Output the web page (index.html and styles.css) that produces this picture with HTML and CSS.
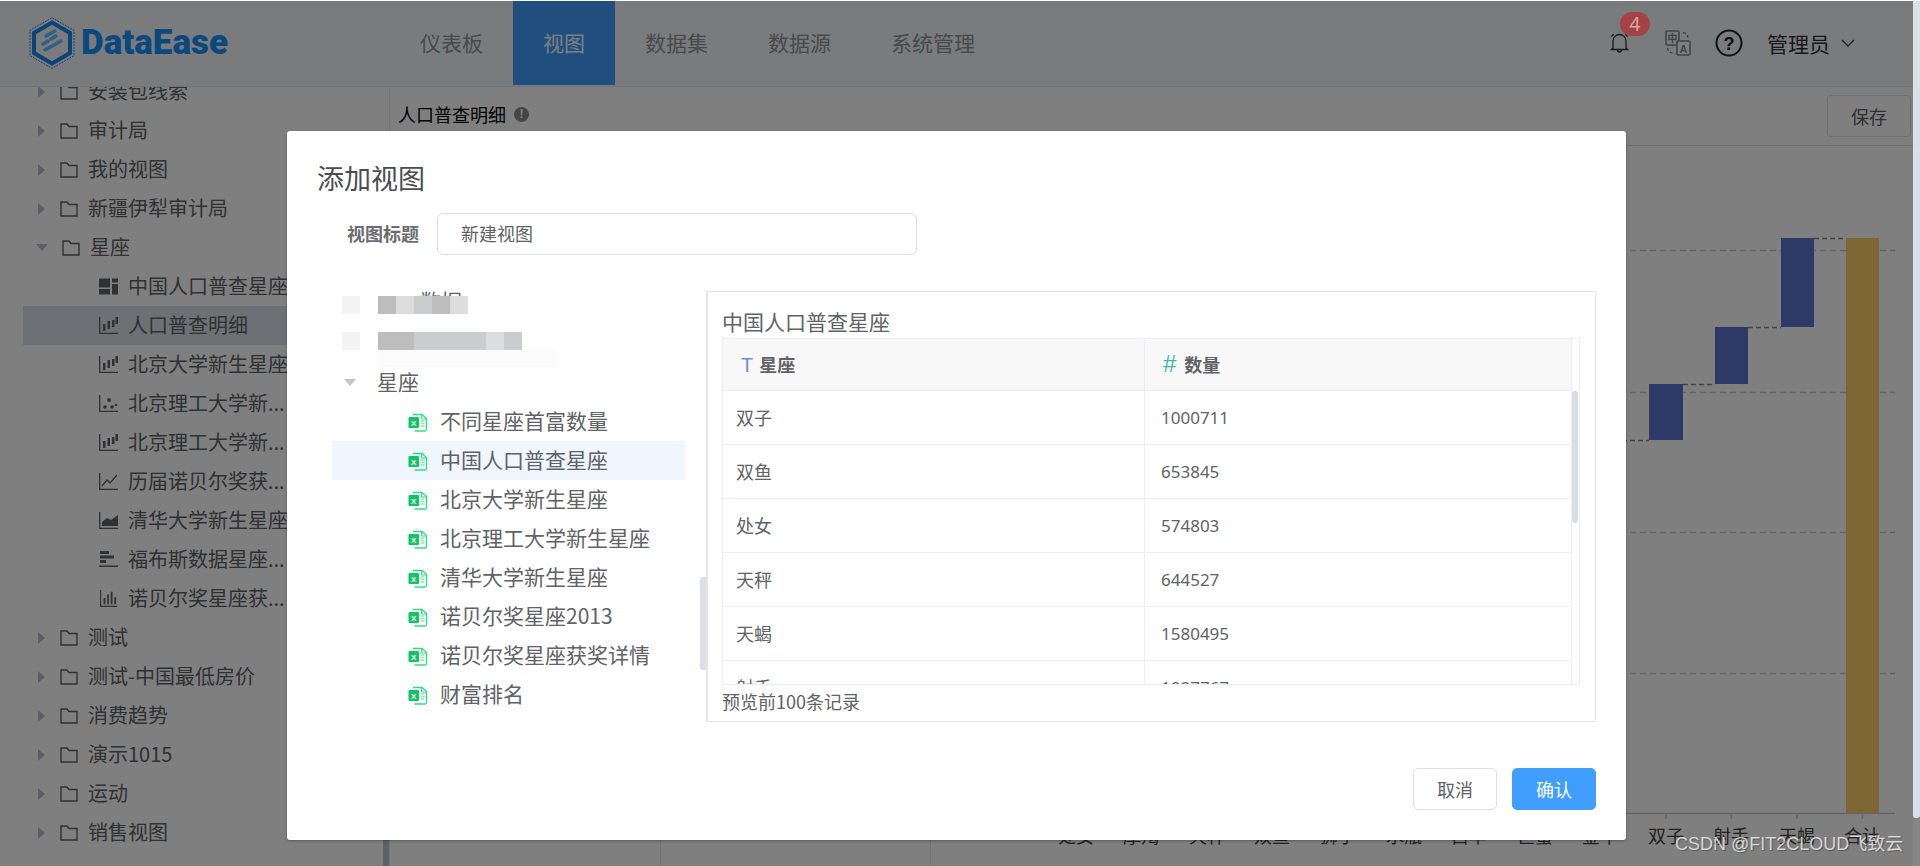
FILE: index.html
```html
<!DOCTYPE html>
<html lang="zh">
<head>
<meta charset="utf-8">
<title>DataEase</title>
<link rel="stylesheet" href="styles.css">
</head>
<body>
<svg class="defs" width="0" height="0">
  <symbol id="i-folder" viewBox="0 0 18 16"><path d="M1 1h6l2 2.500h8v11.500H1z" fill="none" stroke="currentColor" stroke-width="1.400"/></symbol>
  <symbol id="i-dash" viewBox="0 0 19 16"><path d="M0 0h11v9H0zM0 10.500h11V16H0zM13 0h6v4h-6zM13 5.500h6V16h-6z" fill="currentColor"/></symbol>
  <symbol id="i-bar" viewBox="0 0 19 17"><path d="M.7 0v16.300H19" fill="none" stroke="currentColor" stroke-width="1.300"/><path d="M4 7h2.500v7H4zM8.500 4H11v8H8.500zM13 3h2.500v7H13zM16.500 0H19v7h-2.500z" fill="currentColor"/></symbol>
  <symbol id="i-scatter" viewBox="0 0 19 17"><path d="M.7 0v16.300H19" fill="none" stroke="currentColor" stroke-width="1.300"/><circle cx="6" cy="12" r="1.800" fill="currentColor"/><circle cx="10" cy="5" r="2" fill="currentColor"/><circle cx="13" cy="12" r="1.800" fill="currentColor"/><circle cx="17" cy="10" r="1.300" fill="currentColor"/></symbol>
  <symbol id="i-line" viewBox="0 0 19 17"><path d="M.7 0v16.300H19" fill="none" stroke="currentColor" stroke-width="1.300"/><path d="M3 13l5-6 3 3 7-8" fill="none" stroke="currentColor" stroke-width="1.300"/></symbol>
  <symbol id="i-area" viewBox="0 0 19 17"><path d="M.7 0v16.300H19" fill="none" stroke="currentColor" stroke-width="1.300"/><path d="M3 10l5-4 4 2 7-5v11H3z" fill="currentColor"/></symbol>
  <symbol id="i-hbar" viewBox="0 0 19 17"><path d="M1 0h9v3H1zM1 4.500h14v3H1zM1 9h6v3H1zM0 14.500h19V16H0z" fill="currentColor"/></symbol>
  <symbol id="i-vbar" viewBox="0 0 19 19"><path d="M.7 0v18.300H19" fill="none" stroke="currentColor" stroke-width="1.300"/><path d="M4 9h2v7H4zM8 5h2v11H8zM12 2h2v14h-2zM16 8h2v8h-2z" fill="currentColor"/></symbol>
  <symbol id="i-excel" viewBox="0 0 20 20">
    <path d="M5 2.500h9l4.500 4v11a1.500 1.500 0 0 1-1.500 1.500H6.500" fill="none" stroke="#2fdc85" stroke-width="1.300"/>
    <path d="M13.500 2.500v4.500h5" fill="none" stroke="#2fdc85" stroke-width="1"/>
    <path d="M12.500 9h4M12.500 11.500h4M12.500 14h4" stroke="#8fe6b8" stroke-width="1.300"/>
    <rect x="0.500" y="5" width="10.500" height="11" rx="1" fill="#12c463"/>
    <text x="5.700" y="13.800" class="xl-mark">X</text>
  </symbol>
</svg>

<div class="app">
  <header class="topbar">
    <div class="brand">
      <svg class="brand-mark" width="46" height="52" viewBox="0 0 46 52">
        <path d="M23 .7L45 13.300v25.400L23 51.300 1 38.700V13.300z" fill="none" stroke="#1a88f0" stroke-width="1" stroke-dasharray="2 1"/>
        <path d="M23 5.500L41 16v20L23 46.500 5 36V16z" fill="none" stroke="#1a88f0" stroke-width="4"/>
        <path d="M17 19l9-5M14 27l5-3M22 22l5-3M16 33l16-9" stroke="#5fc0ff" stroke-width="3.500" stroke-linecap="round" fill="none"/>
      </svg>
      <span class="brand-name">DataEase</span>
    </div>
    <nav class="nav">
      <a class="nav-item">仪表板</a>
      <a class="nav-item nav-active">视图</a>
      <a class="nav-item">数据集</a>
      <a class="nav-item">数据源</a>
      <a class="nav-item">系统管理</a>
    </nav>
    <div class="tools">
      <span class="bell">
        <svg width="19" height="22" viewBox="0 0 19 22"><path d="M3 16V9a6.500 6.500 0 0 1 13 0v7l1.500 1.500h-16zM7.500 18a2 2 0 0 0 4 0M8.500 2.300h2M1.500 4.500l2-2.500M17.500 4.500l-2-2.500" fill="none" stroke="#333" stroke-width="1.300"/></svg>
        <b class="badge">4</b>
      </span>
      <svg class="tool-lang" width="26" height="26" viewBox="0 0 26 26">
        <rect x="1" y="1" width="13" height="14" rx="1" fill="none" stroke="#888" stroke-width="1.600"/>
        <rect x="12" y="11" width="13" height="14" rx="1" fill="#fff" stroke="#888" stroke-width="1.600"/>
        <text x="7.500" y="12" class="lang-zh">中</text>
        <text x="18.500" y="22.500" class="lang-en">A</text>
        <path d="M18 2.500q4 .5 5 5M2.500 18q.5 4 5 5" fill="none" stroke="#888" stroke-width="1.400" stroke-dasharray="3 2"/>
      </svg>
      <svg class="tool-help" width="28" height="28" viewBox="0 0 28 28">
        <circle cx="14" cy="14" r="12.500" fill="none" stroke="#222" stroke-width="2"/>
        <text x="14" y="20.500" class="help-mark">?</text>
      </svg>
      <span class="user">管理员</span>
      <svg class="user-caret" width="14" height="8" viewBox="0 0 14 8"><path d="M1 1l6 6 6-6" fill="none" stroke="#333" stroke-width="1.300"/></svg>
    </div>
  </header>

  <main class="workspace">
    <aside class="sidebar">
      <ul class="side-list">
        <li class="side-row"><i class="tri"></i><svg class="ico-folder"><use href="#i-folder"/></svg><span>安装包线索</span></li>
        <li class="side-row"><i class="tri"></i><svg class="ico-folder"><use href="#i-folder"/></svg><span>审计局</span></li>
        <li class="side-row"><i class="tri"></i><svg class="ico-folder"><use href="#i-folder"/></svg><span>我的视图</span></li>
        <li class="side-row"><i class="tri"></i><svg class="ico-folder"><use href="#i-folder"/></svg><span>新疆伊犁审计局</span></li>
        <li class="side-row"><i class="tri tri-open"></i><svg class="ico-folder"><use href="#i-folder"/></svg><span>星座</span></li>
        <li class="side-row side-child"><svg class="ico-chart"><use href="#i-dash"/></svg><span>中国人口普查星座</span></li>
        <li class="side-row side-child side-current"><svg class="ico-chart"><use href="#i-bar"/></svg><span>人口普查明细</span></li>
        <li class="side-row side-child"><svg class="ico-chart"><use href="#i-bar"/></svg><span>北京大学新生星座</span></li>
        <li class="side-row side-child"><svg class="ico-chart"><use href="#i-scatter"/></svg><span>北京理工大学新...</span></li>
        <li class="side-row side-child"><svg class="ico-chart"><use href="#i-bar"/></svg><span>北京理工大学新...</span></li>
        <li class="side-row side-child"><svg class="ico-chart"><use href="#i-line"/></svg><span>历届诺贝尔奖获...</span></li>
        <li class="side-row side-child"><svg class="ico-chart"><use href="#i-area"/></svg><span>清华大学新生星座</span></li>
        <li class="side-row side-child"><svg class="ico-chart"><use href="#i-hbar"/></svg><span>福布斯数据星座...</span></li>
        <li class="side-row side-child"><svg class="ico-chart"><use href="#i-vbar"/></svg><span>诺贝尔奖星座获...</span></li>
        <li class="side-row"><i class="tri"></i><svg class="ico-folder"><use href="#i-folder"/></svg><span>测试</span></li>
        <li class="side-row"><i class="tri"></i><svg class="ico-folder"><use href="#i-folder"/></svg><span>测试-中国最低房价</span></li>
        <li class="side-row"><i class="tri"></i><svg class="ico-folder"><use href="#i-folder"/></svg><span>消费趋势</span></li>
        <li class="side-row"><i class="tri"></i><svg class="ico-folder"><use href="#i-folder"/></svg><span>演示1015</span></li>
        <li class="side-row"><i class="tri"></i><svg class="ico-folder"><use href="#i-folder"/></svg><span>运动</span></li>
        <li class="side-row"><i class="tri"></i><svg class="ico-folder"><use href="#i-folder"/></svg><span>销售视图</span></li>
      </ul>
      <div class="side-thumb"></div>
    </aside>
    <section class="content">
      <div class="toolbar">
        <span class="view-name">人口普查明细</span>
        <i class="info-dot">!</i>
        <button class="save-btn">保存</button>
      </div>
      <svg class="chart" width="1523" height="720" viewBox="390 146 1523 720">
        <path class="panel-line" d="M660.500 146V866M930.500 146V866"/>
        <path class="grid-line" d="M1200 250.500H1895M1200 392.500H1895M1200 532.500H1895M1200 673.500H1895"/>
        <path class="link-line" d="M1590 440.500H1649M1683 384.500H1715M1748 327.500H1781M1814 238.500H1846"/>
        <rect class="bar-blue" x="1649" y="384" width="34" height="56"/>
        <rect class="bar-blue" x="1715" y="327" width="33" height="57"/>
        <rect class="bar-blue" x="1781" y="238" width="33" height="89"/>
        <rect class="bar-gold" x="1846" y="238" width="33" height="575"/>
        <path class="axis-line" d="M1050 813.500H1895M1666 814v5M1731.500 814v5M1797 814v5M1862.500 814v5"/>
        <text class="axis-text" x="1076" y="843">处女</text>
        <text class="axis-text" x="1141" y="843">摩羯</text>
        <text class="axis-text" x="1207" y="843">天秤</text>
        <text class="axis-text" x="1272" y="843">双鱼</text>
        <text class="axis-text" x="1338" y="843">狮子</text>
        <text class="axis-text" x="1404" y="843">水瓶</text>
        <text class="axis-text" x="1469" y="843">白羊</text>
        <text class="axis-text" x="1535" y="843">巨蟹</text>
        <text class="axis-text" x="1600" y="843">金牛</text>
        <text class="axis-text" x="1666" y="843">双子</text>
        <text class="axis-text" x="1731" y="843">射手</text>
        <text class="axis-text" x="1797" y="843">天蝎</text>
        <text class="axis-text" x="1862" y="843">合计</text>
      </svg>
    </section>
  </main>
</div>

<div class="overlay"></div>

<div class="dialog">
  <h2 class="dialog-title">添加视图</h2>
  <div class="form-row">
    <label class="form-label">视图标题</label>
    <input class="form-input" value="新建视图">
  </div>
  <div class="dialog-body">
    <div class="tree">
      <div class="tree-row tree-masked"><span class="masked-text">数据</span>
        <div class="mosaic"><i class="m m-faint"></i><i class="m m-gap"></i><i class="m m3"></i><i class="m m1"></i><i class="m m2"></i><i class="m m3"></i><i class="m m1"></i></div>
      </div>
      <div class="tree-row tree-masked">
        <div class="mosaic mosaic-wide"><i class="m m-faint"></i><i class="m m-gap"></i><i class="m m3"></i><i class="m m3"></i><i class="m m2"></i><i class="m m2"></i><i class="m m2"></i><i class="m m2"></i><i class="m m1"></i><i class="m m2"></i></div>
      </div>
      <div class="tree-row tree-group"><i class="tree-tri"></i><span>星座</span></div>
      <div class="tree-row tree-leaf"><svg class="ico-excel"><use href="#i-excel"/></svg><span>不同星座首富数量</span></div>
      <div class="tree-row tree-leaf tree-selected"><svg class="ico-excel"><use href="#i-excel"/></svg><span>中国人口普查星座</span></div>
      <div class="tree-row tree-leaf"><svg class="ico-excel"><use href="#i-excel"/></svg><span>北京大学新生星座</span></div>
      <div class="tree-row tree-leaf"><svg class="ico-excel"><use href="#i-excel"/></svg><span>北京理工大学新生星座</span></div>
      <div class="tree-row tree-leaf"><svg class="ico-excel"><use href="#i-excel"/></svg><span>清华大学新生星座</span></div>
      <div class="tree-row tree-leaf"><svg class="ico-excel"><use href="#i-excel"/></svg><span>诺贝尔奖星座2013</span></div>
      <div class="tree-row tree-leaf"><svg class="ico-excel"><use href="#i-excel"/></svg><span>诺贝尔奖星座获奖详情</span></div>
      <div class="tree-row tree-leaf"><svg class="ico-excel"><use href="#i-excel"/></svg><span>财富排名</span></div>
      <div class="tree-thumb"></div>
    </div>
    <div class="preview">
      <div class="preview-title">中国人口普查星座</div>
      <div class="table-wrap">
        <table class="data-table">
          <thead>
            <tr><th class="col-a"><span class="type-t">T</span>星座</th><th class="col-b"><span class="type-n">#</span>数量</th></tr>
          </thead>
          <tbody>
            <tr><td>双子</td><td class="num">1000711</td></tr>
            <tr><td>双鱼</td><td class="num">653845</td></tr>
            <tr><td>处女</td><td class="num">574803</td></tr>
            <tr><td>天秤</td><td class="num">644527</td></tr>
            <tr><td>天蝎</td><td class="num">1580495</td></tr>
            <tr><td>射手</td><td class="num">1097767</td></tr>
          </tbody>
        </table>
        <div class="table-thumb"></div>
      </div>
      <div class="preview-note">预览前100条记录</div>
    </div>
  </div>
  <div class="dialog-footer">
    <button class="btn btn-plain">取消</button>
    <button class="btn btn-primary">确认</button>
  </div>
</div>

<div class="page-scroll"><div class="page-thumb"></div></div>
<div class="watermark">CSDN @FIT2CLOUD飞致云</div>
</body>
</html>
```

FILE: styles.css
```css
* { box-sizing: border-box; }
html, body { margin: 0; padding: 0; height: 866px; overflow: hidden; background: #fff; }
body { font-family: "Noto Sans CJK SC", "Noto Sans", sans-serif; color: #606266; position: relative; width: 1920px; }
.defs { position: absolute; }
ul { list-style: none; margin: 0; padding: 0; }

.app { padding-top: 1px; height: 866px; display: flex; flex-direction: column; width: 1913px; }
.topbar { height: 86px; flex: none; display: flex; background: #f5f7fa; border-bottom: 1px solid #e6e6e6; }
.brand { width: 390px; flex: none; display: flex; align-items: center; padding-left: 29px; gap: 6px; padding-bottom: 2px; }
.brand-name { font-family: Roboto, sans-serif; font-weight: 900; font-size: 35px; color: #1790fa; }
.nav { display: flex; height: 84px; }
.nav-item { padding: 0 30px; font-size: 21px; line-height: 82px; color: #909399; }
.nav-active { background: #409eff; color: #fff; }
.tools { margin-left: auto; display: flex; align-items: center; padding: 0 58px 2px 0; }
.bell { position: relative; display: flex; margin-right: 36px; }
.badge { position: absolute; z-index: 20; left: 10px; top: -20px; width: 30px; height: 24px; border-radius: 12px; background: #a34345; color: #d9a6a6; font: 400 19px/24px "Noto Sans", sans-serif; text-align: center; }
.tool-lang { margin-right: 24px; }
.tool-help { margin-right: 24px; }
.lang-zh, .lang-en { font-size: 10px; font-weight: 700; fill: #888; text-anchor: middle; font-family: "Noto Sans CJK SC", sans-serif; }
.lang-en { font-family: "Liberation Sans", sans-serif; font-size: 11px; }
.help-mark { font: 700 18px "Liberation Sans", sans-serif; fill: #222; text-anchor: middle; }
.user { font-size: 21px; color: #303133; margin-right: 11px; }
.user-caret { display: block; }

.workspace { flex: 1; display: flex; min-height: 0; }
.sidebar { width: 390px; flex: none; background: #fff; border-right: 1px solid #e6e6e6; padding-left: 23px; overflow: hidden; position: relative; }
.side-list { margin-top: -15px; }
.side-row { height: 39px; display: flex; align-items: center; padding-left: 15px; font-size: 20px; color: #606266; white-space: nowrap; }
.side-row span { margin-bottom: 2px; }
.side-child { padding-left: 76px; }
.side-current { background: #dbe2ea; }
.tri { width: 0; height: 0; border-left: 7px solid #b8bcc6; border-top: 6px solid transparent; border-bottom: 6px solid transparent; margin-right: 15px; }
.tri-open { border-left: 6px solid transparent; border-right: 6px solid transparent; border-top: 7px solid #b8bcc6; border-bottom: 0; margin: 0 14px 0 -2px; }
.ico-folder { width: 18px; height: 16px; margin-right: 10px; color: #606266; flex: none; }
.ico-chart { width: 19px; height: 17px; margin-right: 10px; color: #606266; flex: none; }
.side-thumb { position: absolute; right: 0; top: 510px; width: 6px; height: 280px; background: #bfc1d0; }

.content { flex: 1; min-width: 0; background: #fff; display: flex; flex-direction: column; }
.toolbar { height: 59px; flex: none; display: flex; align-items: center; padding: 0 2px 0 8px; border-bottom: 1px solid #dcdfe6; }
.view-name { font-size: 18px; color: #000; margin-bottom: 4px; }
.info-dot { width: 15px; height: 15px; margin: 0 0 3px 8px; border-radius: 50%; background: #8a8a8a; color: #fff; font: 700 12px/15px "Liberation Sans", sans-serif; text-align: center; }
.save-btn { margin-left: auto; width: 84px; height: 42px; border: 1px solid #dcdfe6; border-radius: 4px; background: #fff; color: #606266; font: 18px "Noto Sans CJK SC", sans-serif; }
.chart { display: block; flex: none; }
.panel-line { stroke: #e6e6e6; stroke-width: 1; fill: none; }
.grid-line { stroke: #c8c8c8; stroke-width: 1.300; stroke-dasharray: 6 4; fill: none; }
.link-line { stroke: #888; stroke-width: 1.500; stroke-dasharray: 5 3; fill: none; }
.bar-blue { fill: #5a74cc; }
.bar-gold { fill: #fbcc66; }
.axis-line { stroke: #ccc; stroke-width: 1.500; fill: none; }
.axis-text { font-size: 18px; fill: #444; text-anchor: middle; font-family: "Noto Sans CJK SC", sans-serif; }

.overlay { position: absolute; left: 0; right: 0; top: 1px; bottom: 0; background: rgba(0, 0, 0, .5); z-index: 10; }

.dialog { position: absolute; z-index: 12; left: 287px; top: 131px; width: 1339px; height: 709px; background: #fff; border-radius: 3px; padding: 30px 30px 0; box-shadow: 0 1px 3px rgba(0, 0, 0, .3); }
.dialog-title { margin: 0; font-size: 27px; font-weight: 400; line-height: 34px; color: #494c52; }
.form-row { display: flex; align-items: center; margin-top: 18px; padding-left: 30px; }
.form-label { width: 90px; font-size: 18px; font-weight: 700; color: #6a6c70; margin-bottom: 2px; }
.form-input { width: 480px; height: 42px; border: 1px solid #dcdfe6; border-radius: 6px; padding: 0 23px 2px; font: 18px "Noto Sans CJK SC", sans-serif; color: #606266; outline: none; }
.dialog-body { display: flex; margin-top: 36px; height: 431px; }
.tree { width: 389px; flex: none; padding: 0 21px 0 15px; margin-top: -6px; position: relative; }
.tree-row { height: 39px; display: flex; align-items: center; font-size: 21px; color: #606266; white-space: nowrap; position: relative; }
.tree-row span { margin-bottom: 4px; }
.tree-group { padding-left: 12px; }
.tree-tri { width: 0; height: 0; border-left: 6px solid transparent; border-right: 6px solid transparent; border-top: 7px solid #c0c4cc; margin-right: 21px; }
.tree-leaf { padding-left: 76px; }
.tree-selected { background: #eff6fe; }
.ico-excel { width: 20px; height: 20px; margin-right: 12px; flex: none; }
.xl-mark { font: 700 8px "Liberation Sans", sans-serif; fill: #fff; text-anchor: middle; }
.tree-thumb { position: absolute; right: 0; top: 292px; width: 6px; height: 93px; background: #dcdfe8; border-radius: 3px 0 0 3px; }
.tree-masked { padding-left: 88px; color: #606266; }
.tree-row .masked-text { margin-bottom: 9px; }
.mosaic { position: absolute; left: 10px; top: 11px; display: flex; }
.mosaic-wide { top: 8px; box-shadow: 36px 18px 0 -1px #fbfbfb; }
.m { width: 18px; height: 18px; display: block; }
.m-faint { background: #f4f4f5; }
.m-gap { background: #fff; }
.m1 { background: #dddddd; }
.m2 { background: #cbcccd; }
.m3 { background: #bdbdbe; }

.preview { width: 890px; flex: none; height: 431px; border: 1px solid #e6e6e6; border-left-width: 2px; padding: 16px 15px 0 14px; display: flex; flex-direction: column; }
.preview-title { font-size: 21px; line-height: 26px; margin-bottom: 4px; color: #606266; }
.table-wrap { height: 347px; flex: none; border: 1px solid #ebeef5; overflow: hidden; position: relative; }
.data-table { width: 849px; border-collapse: separate; border-spacing: 0; table-layout: fixed; }
.data-table th { height: 52px; background: #f8f8f8; text-align: left; font-size: 18px; font-weight: 700; border-bottom: 1px solid #ebeef5; border-right: 1px solid #ebeef5; padding: 0 0 2px 18px; color: #606266; }
.data-table td { height: 54px; font-size: 18px; border-bottom: 1px solid #ebeef5; border-right: 1px solid #ebeef5; padding: 0 0 2px 13px; color: #606266; }
.data-table .col-a { width: 422px; }
.data-table .num { font-family: "Noto Sans", sans-serif; font-size: 17px; padding: 0 0 0 16px; }
.type-t, .type-n { font-weight: 400; font-size: 20px; margin-right: 6px; font-family: "Liberation Sans", sans-serif; }
.type-t { color: #6a8fdc; }
.type-n { color: #3eb8a8; font-size: 24px; margin-right: 8px; }
.table-thumb { position: absolute; right: 1px; top: 52px; width: 6px; height: 132px; background: #d9dbe5; border-radius: 3px; }
.preview-note { flex: 1; display: flex; align-items: center; font-size: 18px; color: #606266; padding-bottom: 4px; }

.dialog-footer { display: flex; justify-content: flex-end; gap: 15px; margin-top: 46px; }
.btn { width: 84px; height: 42px; border-radius: 5px; font: 18px "Noto Sans CJK SC", sans-serif; padding: 0; }
.btn-plain { background: #fff; border: 1px solid #dcdfe6; color: #606266; }
.btn-primary { background: #409eff; border: 1px solid #409eff; color: #fff; }

.page-scroll { position: absolute; z-index: 13; right: 0; top: 1px; bottom: 0; width: 7px; background: #868686; }
.page-thumb { height: 817px; background: #dcdfe8; border-radius: 0 0 3px 3px; }
.watermark { position: absolute; z-index: 14; left: 1675px; top: 830px; font: 18px/28px "Liberation Sans", "Noto Sans CJK SC", sans-serif; color: rgba(255, 255, 255, .72); text-shadow: 1px 1px 1px rgba(0, 0, 0, .3); white-space: nowrap; }
```
